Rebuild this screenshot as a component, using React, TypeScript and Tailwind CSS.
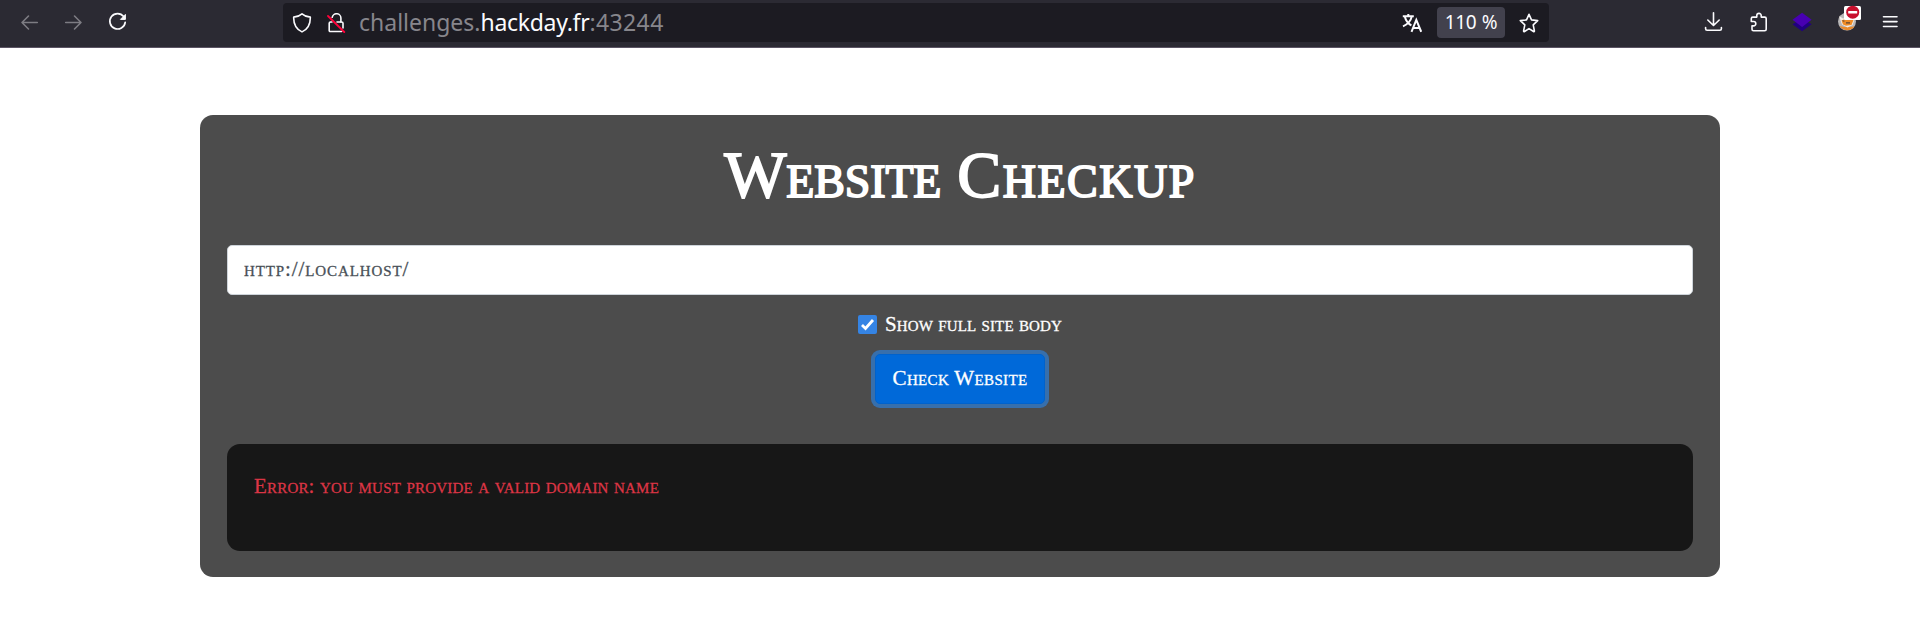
import type { ReactNode } from 'react';

function Icon({ children, className = '' }: { children: ReactNode; className?: string }) {
  return (
    <svg
      width="20"
      height="20"
      viewBox="0 0 20 20"
      fill="none"
      stroke="currentColor"
      strokeWidth="1.6"
      strokeLinecap="round"
      strokeLinejoin="round"
      className={'shrink-0 ' + className}
    >
      {children}
    </svg>
  );
}

function Toolbar() {
  return (
    <header className="flex h-12 items-start border-b border-[#5b5464] bg-[#2b2a33] text-[#fbfbfe]">
      <nav className="flex w-[283px] shrink-0 gap-6 pt-3 pl-5">
        <Icon className="text-[#7d7c83]">
          <path d="M17.300 10.500H2M8.500 4 2 10.500 8.500 17" />
        </Icon>
        <Icon className="text-[#7d7c83]">
          <path d="M1.700 10.500H17M10.500 4 17 10.500 10.500 17" />
        </Icon>
        <Icon>
          <path d="M15.700 4.600A7.700 7.700 0 1 0 17.200 10.300" strokeWidth="1.700" />
          <path d="M17.400 2.800v4.600h-4.600z" fill="currentColor" strokeWidth="1" />
        </Icon>
      </nav>

      <div className="mt-[3px] flex h-[39px] w-[1266px] shrink-0 items-center rounded bg-[#1c1b22] pl-[9px]">
        <Icon>
          <path d="M10 .9c2.100 1.900 5 3 8.300 3.200.2 6.300-2 11.800-8.300 14.800C3.700 15.900 1.500 10.400 1.700 4.100 5 3.900 7.900 2.800 10 .9z" />
        </Icon>
        <Icon className="ml-[14px]">
          <path d="M6.200 4.300A4.400 4.400 0 0 1 14.900 5.500V9h.800a1.300 1.300 0 0 1 1.300 1.300V15M6 9H4.500a1.300 1.300 0 0 0-1.300 1.300v7.200a1 1 0 0 0 1 1h11.500" />
          <path d="M11 9h4" />
          <path d="m2 3 16.300 16" stroke="#ff0039" strokeWidth="1.800" />
        </Icon>
        <div className="ml-[13px] flex text-[23px] leading-[39px] font-['Noto_Sans',sans-serif]">
          <span className="text-[#87868c]">challenges.</span>
          <span className="tracking-[-0.3px]">hackday.fr</span>
          <span className="tracking-[0.4px] text-[#87868c]">:43244</span>
        </div>
        <Icon className="mr-[15px] ml-auto">
          <path
            d="M.8 3.200h11M6.300 1v2.200M2.800 3.400c1 4.200 3.400 7.200 6.600 8.900M9.800 3.400C8.800 8 5.900 11.200 1 13.300M9.500 18.800l4.800-12 4.900 12M11.200 14.900h6.300"
            strokeWidth="2"
            strokeLinecap="butt"
            strokeLinejoin="miter"
          />
        </Icon>
        <div className="h-[31px] w-[68px] rounded bg-[#42414d] text-center text-[19px] leading-[30px] tracking-[-0.4px] whitespace-nowrap [word-spacing:1px] font-['Noto_Sans',sans-serif]">
          110 %
        </div>
        <Icon className="mr-[10px] ml-[14px]">
          <path d="m10 1.300 2.500 5.600 6.200.7-4.500 4.200 1.200 6.100a.6.600 0 0 1-.9.600L10 15.600l-4.500 2.900a.6.600 0 0 1-.9-.6l1.200-6.100-4.500-4.200 6.200-.7z" />
        </Icon>
      </div>

      <div className="ml-auto flex items-start pt-3 pr-5">
        <Icon className="mr-[26px]">
          <path d="M10.500.800v12.500M4.800 8l5.700 5.500L16.200 8M2.600 15.500v1.300a1.500 1.500 0 0 0 1.500 1.500h12.800a1.500 1.500 0 0 0 1.500-1.500v-1.300" />
        </Icon>
        <Icon className="mr-[23px]">
          <path d="M2.300 7.200V6.600a1.500 1.500 0 0 1 1.500-1.500h4V3.600a2.200 2.200 0 0 1 4.400 0v1.500h3.500a1.500 1.500 0 0 1 1.500 1.500v10.600a1.500 1.500 0 0 1-1.500 1.500H4.500A1.500 1.500 0 0 1 3 17.200v-3.300h1.600a2.200 2.200 0 0 0 0-4.400H2.300z" />
        </Icon>
        <Icon className="mr-[24px]">
          <path d="m.5 12.200 9.600-5.700 9.500 5.700-9.500 7z" fill="#210080" stroke="none" />
          <path d="M.5 7.800 10.100.8l9.500 7-9.500 7.100z" fill="#4800b2" stroke="none" />
        </Icon>
        <svg width="26" height="28" viewBox="0 0 26 28" className="-mt-2 mr-[18px] shrink-0">
          <circle cx="11" cy="17.600" r="9" fill="#b9b7b8" />
          <path d="M3.500 22a9 9 0 0 0 15 .5l-4 .2-6 .2z" fill="#e98b2d" />
          <path d="M3 12 7 14.500l8-1.500 4 1-2.500 7-5 2.500-5.500-3z" fill="#f5efe9" />
          <path d="M5.500 16.500 8 15.500l7-.5 2.500 1-2 5-5.500.8-3-1.300z" fill="#ef8c25" />
          <path d="m6 16 3 1-1.500.7zM10 18.300h4v1.200h-4z" fill="#5a4539" />
          <rect x="8" y="2" width="17" height="14" rx="1.500" fill="#fff" />
          <circle cx="16.700" cy="8.200" r="6.500" fill="#c8102e" />
          <rect x="12.200" y="7" width="9" height="2.600" rx=".5" fill="#fff" />
        </svg>
        <Icon>
          <path d="M3.500 4.700h13.500M3.500 9.600h13.500M3.500 14.500h13.500" />
        </Icon>
      </div>
    </header>
  );
}

export default function App() {
  return (
    <div className="h-[619px] overflow-hidden bg-white">
      <Toolbar />
      <main className="mx-auto mt-[67px] flex h-[462px] w-[1520px] flex-col items-center rounded-[13px] bg-[#4c4c4c] px-[27px] text-[21px] text-white font-['Liberation_Serif',serif] [font-variant:small-caps]">
        <h1 className="mt-5 flex h-[80px] gap-[16px] text-[66px] leading-[80px] [-webkit-text-stroke:1.800px_white]">
          <span className="tracking-[-0.150px]">Website</span>
          <span className="tracking-[1.500px]">Checkup</span>
        </h1>
        <div className="mt-[30px] h-[50px] w-full rounded-[5px] border border-[#ced4da] bg-white pl-4 leading-[47px] tracking-[0.900px] text-[#495057] [-webkit-text-stroke:0.300px_#495057]">
          http://localhost/
        </div>
        <label className="mt-[17px] flex h-[24px] items-center">
          <span className="mr-2 flex h-[19px] w-[19px] items-center justify-center rounded-[2px] bg-[#3584e4]">
            <svg width="15" height="15" viewBox="0 0 15 15" fill="none" stroke="white" strokeWidth="2.800">
              <path d="m2 8 3.500 3.500L13 3" />
            </svg>
          </span>
          <span className="pt-0.5 tracking-[0.100px] [-webkit-text-stroke:0.300px_white]">Show full site body</span>
        </label>
        <button className="mt-[18px] h-[50px] w-[170px] rounded-[5px] border border-[#0062cc] bg-[#0069d9] tracking-[0.350px] ring-4 ring-[#376fac] [font-variant:small-caps] [-webkit-text-stroke:0.300px_white]">
          Check Website
        </button>
        <div className="mt-10 h-[107px] w-full rounded-[13px] bg-[#171717] pt-[27px] pl-[27px] leading-[31px] tracking-[0.190px] text-[#dc3545] [-webkit-text-stroke:0.300px_#dc3545]">
          Error: you must provide a valid domain name
        </div>
      </main>
    </div>
  );
}
